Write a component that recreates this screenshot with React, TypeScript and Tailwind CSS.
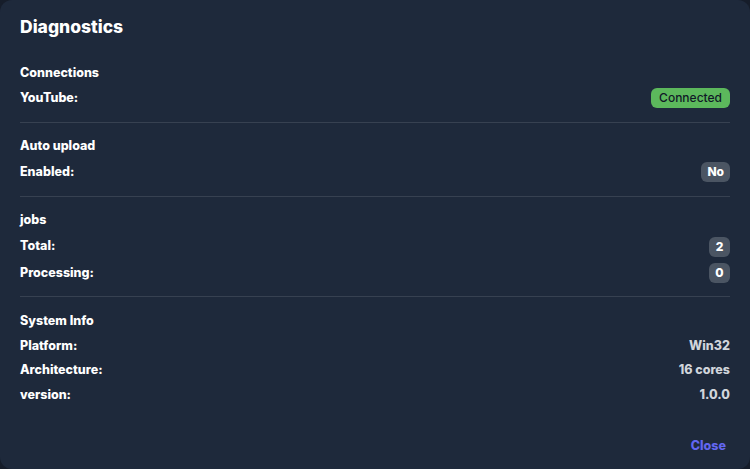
import React from "react";

const Badge = ({ children, tone }: { children: React.ReactNode; tone: "green" | "gray" }) => (
  <span
    className={
      tone === "green"
        ? "inline-flex h-[20px] items-center rounded-md bg-[#5cb85c] px-2 text-[12px] font-medium text-[#111827]"
        : "inline-flex h-[20px] min-w-[21px] items-center justify-center rounded-md bg-[#4b5563] px-1.5 text-[12px] font-extrabold text-white"
    }
  >
    {children}
  </span>
);

const Heading = ({ children }: { children: React.ReactNode }) => (
  <div className="flex h-5 items-center text-[12.5px] font-extrabold text-white">{children}</div>
);

const Row = ({ label, children, h = "h-[26px]" }: { label: string; children: React.ReactNode; h?: string }) => (
  <div className={`flex items-center justify-between ${h}`}>
    <span className="text-[12.5px] font-extrabold text-white">{label}</span>
    {children}
  </div>
);

const Value = ({ children }: { children: React.ReactNode }) => (
  <span className="text-[12.5px] font-extrabold text-[#d1d5db]">{children}</span>
);

const Divider = () => <div className="h-px bg-[#374151]" />;

export default function App() {
  return (
    <div className="h-[469px] w-[750px] bg-[#161d2a]" style={{ fontFamily: "Inter, 'Noto Sans', sans-serif" }}>
      <div className="flex h-full flex-col rounded-xl bg-[#1e293b] px-5">
        <div className="mt-[13px] flex h-[28px] items-center text-[17.5px] font-extrabold text-white">Diagnostics</div>

        <div className="mt-[22px]">
          <Heading>Connections</Heading>
          <div className="mt-[2px]">
            <Row label="YouTube:">
              <Badge tone="green">Connected</Badge>
            </Row>
          </div>
        </div>
        <div className="mt-[11px]">
          <Divider />
        </div>

        <div className="mt-[13px]">
          <Heading>Auto upload</Heading>
          <div className="mt-[3px]">
            <Row label="Enabled:">
              <Badge tone="gray">No</Badge>
            </Row>
          </div>
        </div>
        <div className="mt-[11px]">
          <Divider />
        </div>

        <div className="mt-[13px]">
          <Heading>jobs</Heading>
          <div className="mt-[3px]">
            <Row label="Total:" h="h-[27px]">
              <Badge tone="gray">2</Badge>
            </Row>
            <Row label="Processing:" h="h-[26px]">
              <Badge tone="gray">0</Badge>
            </Row>
          </div>
        </div>
        <div className="mt-[10px]">
          <Divider />
        </div>

        <div className="mt-[14px]">
          <Heading>System Info</Heading>
          <div className="mt-[3px]">
            <Row label="Platform:" h="h-[24px]">
              <Value>Win32</Value>
            </Row>
            <Row label="Architecture:" h="h-[24px]">
              <Value>16 cores</Value>
            </Row>
            <Row label="version:" h="h-[26px]">
              <Value>1.0.0</Value>
            </Row>
          </div>
        </div>

        <div className="mt-auto mb-[13px] flex justify-end">
          <button className="flex h-5 items-center pr-1 text-[12.5px] font-extrabold text-[#6366f1]">Close</button>
        </div>
      </div>
    </div>
  );
}
